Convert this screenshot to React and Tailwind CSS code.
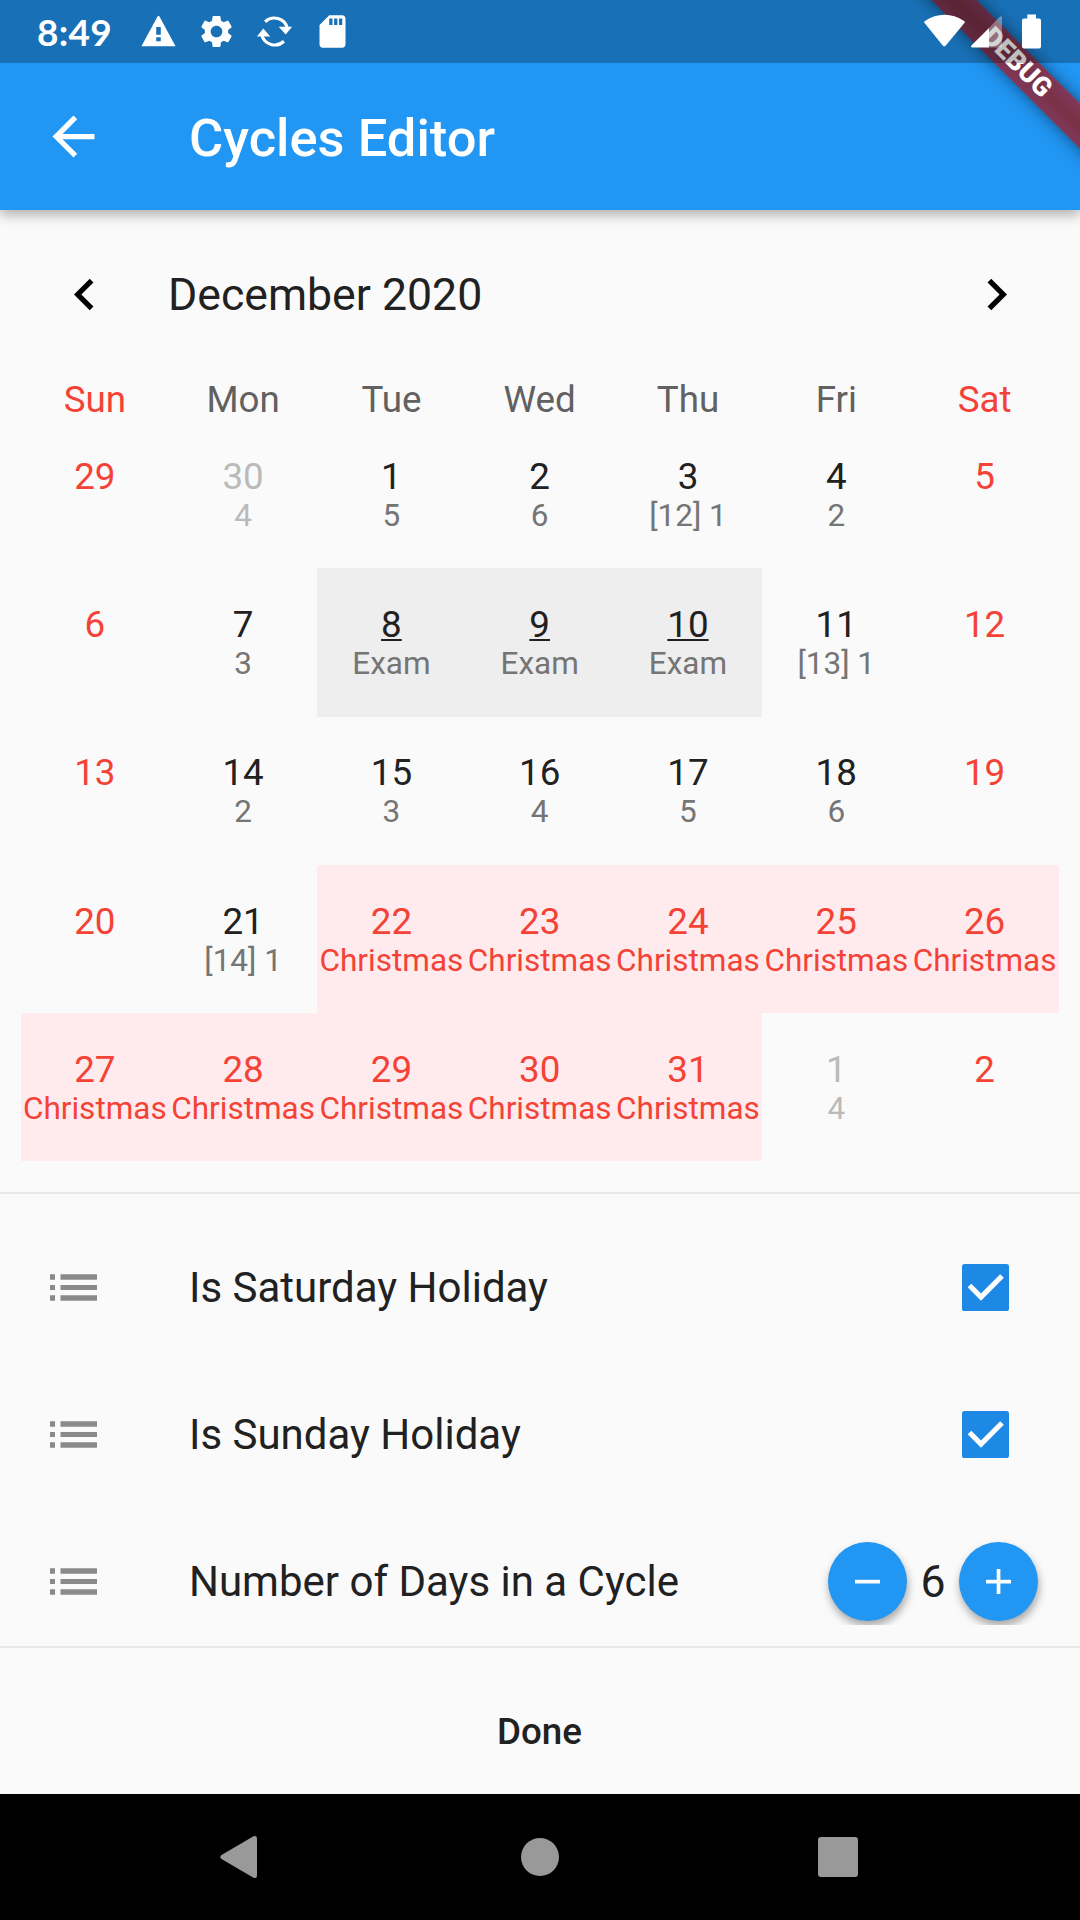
import React from "react";

const red = "text-[#f44336]";
const ink = "text-[#212121]";
const grey = "text-[#757575]";
const faded = "text-[#bababa]";

const weekdays = ["Sun", "Mon", "Tue", "Wed", "Thu", "Fri", "Sat"];

// Each day: [number, label, kind]
const days = [
  ["29", "", "off"], ["30", "4", "out"], ["1", "5"], ["2", "6"], ["3", "[12] 1"], ["4", "2"], ["5", "", "off"],
  ["6", "", "off"], ["7", "3"], ["8", "Exam", "exam"], ["9", "Exam", "exam"], ["10", "Exam", "exam"], ["11", "[13] 1"], ["12", "", "off"],
  ["13", "", "off"], ["14", "2"], ["15", "3"], ["16", "4"], ["17", "5"], ["18", "6"], ["19", "", "off"],
  ["20", "", "off"], ["21", "[14] 1"], ["22", "Christmas", "xmas"], ["23", "Christmas", "xmas"], ["24", "Christmas", "xmas"], ["25", "Christmas", "xmas"], ["26", "Christmas", "xmas"],
  ["27", "Christmas", "xmas"], ["28", "Christmas", "xmas"], ["29", "Christmas", "xmas"], ["30", "Christmas", "xmas"], ["31", "Christmas", "xmas"], ["1", "4", "out"], ["2", "", "off"],
];

const kinds = {
  off: { cell: "", num: red, sub: red },
  out: { cell: "", num: faded, sub: faded },
  exam: { cell: "bg-[#eeeeee]", num: ink + " underline decoration-[2px] underline-offset-[2px]", sub: grey },
  xmas: { cell: "bg-[#ffebee]", num: red, sub: red },
  normal: { cell: "", num: ink, sub: grey },
};

function Icon({ d, size, className = "", children }) {
  return (
    <svg viewBox="0 0 24 24" className={size + " shrink-0 " + className} fill="currentColor">
      {d && <path d={d} />}
      {children}
    </svg>
  );
}

function StatusBar() {
  return (
    <div className="relative z-20 flex h-[63px] items-center bg-black/25 pl-[37px] text-white">
      <span className="w-[75px] whitespace-nowrap font-[Lato,sans-serif] text-[37px] font-bold leading-none tracking-[0.3px]">8:49</span>
      <div className="ml-[27px] flex items-center gap-[19px]">
        <Icon size="size-[39px]" d="M1.500 21h21L12.600 2.800q-.6-.9-1.200 0zm11.900-3h-2.800v-2.400h2.800v2.400zm0-4h-2.800V9.200h2.800v4.800z" />
        <Icon size="size-[39px]" d="M19.140 12.940c.04-.3.06-.61.06-.94 0-.32-.02-.64-.07-.94l2.030-1.580a.49.49 0 0 0 .12-.61l-1.920-3.320a.488.488 0 0 0-.59-.22l-2.390.96c-.5-.38-1.030-.7-1.620-.94l-.36-2.540a.484.484 0 0 0-.48-.41h-3.840c-.24 0-.43.17-.47.41l-.36 2.540c-.59.24-1.130.57-1.620.94l-2.390-.96c-.22-.08-.47 0-.59.22L2.740 8.870c-.12.21-.08.47.12.61l2.030 1.580c-.05.3-.09.63-.09.94s.02.64.07.94l-2.030 1.580a.49.49 0 0 0-.12.61l1.920 3.320c.12.22.37.29.59.22l2.390-.96c.5.38 1.030.7 1.620.94l.36 2.540c.05.24.24.41.48.41h3.840c.24 0 .44-.17.47-.41l.36-2.540c.59-.24 1.130-.56 1.620-.94l2.390.96c.22.08.47 0 .59-.22l1.920-3.320c.12-.22.07-.47-.12-.61l-2.010-1.580zM12 15.600c-1.980 0-3.600-1.620-3.600-3.600s1.620-3.600 3.600-3.600 3.600 1.620 3.600 3.600-1.620 3.600-3.600 3.600z" />
        <Icon size="size-[39px]">
          <path d="M6.200 6A8.300 8.300 0 0 1 19.900 9.900M17.800 18A8.300 8.300 0 0 1 4.100 14.100" fill="none" stroke="currentColor" strokeWidth="1.900" />
          <path d="M14.600 9h8.200l-3.900 4.800zM9.400 15H1.200l3.900-4.800z" />
        </Icon>
        <Icon size="size-[39px]" d="M18 2h-8L4.020 8 4 20c0 1.100.9 2 2 2h12c1.100 0 2-.9 2-2V4c0-1.100-.9-2-2-2zm-6 6h-2V4h2v4zm3 0h-2V4h2v4zm3 0h-2V4h2v4z" />
      </div>
      <svg viewBox="0 0 120 36" className="ml-auto mr-[36px] h-[36px] w-[120px]" fill="currentColor">
        <path d="M1 9.500C-.3 8.300 0 7.700 1 7 13-1.500 28-1.500 40 7c1 .7 1.300 1.300 0 2.500L22 31.300c-1.200 1.500-2.300 1.500-3.500 0z" />
        <path d="M65 14v19.500H48.500c-1.600 0-2-1-.8-2.200z" />
        <path d="M65 33.500V14L75.500 3C76.700 1.800 78 2 78 3.500v30z" opacity=".35" />
        <path d="M103.300.5h8.700v4h3q2 0 2 2v26q0 2-2 2h-15q-2 0-2-2v-26q0-2 2-2h3.300z" />
      </svg>
    </div>
  );
}

function DebugBanner() {
  return (
    <div className="pointer-events-none absolute right-0 top-0 z-10 size-[210px] overflow-hidden">
      <div className="absolute left-[17px] top-[47.400px] flex h-[31.500px] w-[260px] rotate-45 items-center justify-center bg-linear-to-b from-[#80385a] from-0% via-[#7a3045] via-50% to-[#80385a] to-100% text-[26.775px] font-black leading-none text-white shadow-[0_0_16px_rgba(0,0,0,0.5)]">
        <span>DEBUG</span>
      </div>
    </div>
  );
}

function ListRow({ title, children }) {
  return (
    <div className="flex h-[147px] items-center pl-[42px] pr-[42px]">
      <svg viewBox="0 0 56 27" className="h-[27px] w-[56px] shrink-0" fill="#8a8a8a">
        <path d="M8 .3h5v5.500H8zM18.500.3H55v5.500H18.500zM8 10.900h5V16H8zM18.500 10.900H55V16H18.500zM8 21.300h5v5.500H8zM18.500 21.300H55v5.500H18.500z" />
      </svg>
      <span className="ml-[91px] flex-1 text-[42px] leading-[50px] text-[#212121]">{title}</span>
      {children}
    </div>
  );
}

function Check() {
  return (
    <svg viewBox="0 0 47 47" className="mr-[29px] size-[47px]" aria-label="checked">
      <rect width="47" height="47" rx="2.600" fill="#1e88e5" />
      <path d="M7.500 21.500L19 33 40 12" fill="none" stroke="#fff" strokeWidth="5.200" />
    </svg>
  );
}

function RoundButton({ plus }) {
  return (
    <button className="flex size-[79px] items-center justify-center rounded-full bg-[#2196f3] shadow-[1px_5px_9px_rgba(0,0,0,0.34)]" aria-label={plus ? "Increase" : "Decrease"}>
      <svg viewBox="0 0 25 25" className="size-[25px]" fill="#fff">
        <path d="M0 10.800h25v3.700H0z" />
        {plus && <path d="M10.700 0h3.700v25h-3.700z" />}
      </svg>
    </button>
  );
}

export default function App() {
  return (
    <div className="flex h-[1920px] w-[1080px] flex-col overflow-hidden bg-[#fafafa] font-[Roboto,sans-serif]">
      <header className="relative h-[210px] shrink-0 bg-[#2196f3] text-white shadow-[0_5px_12px_rgba(0,0,0,0.3)]">
        <StatusBar />
        <div className="flex h-[147px] items-center pl-[42px]">
          <Icon size="size-[63px]" d="M20 11H7.830l5.590-5.590L12 4l-8 8 8 8 1.410-1.410L7.830 13H20v-2z" />
          <h1 className="ml-[84px] pt-[2px] text-[52.500px] font-medium leading-[62px]">Cycles Editor</h1>
        </div>
        <DebugBanner />
      </header>

      <div className="flex h-[168px] shrink-0 items-center px-[52.500px]">
        <Icon size="size-[63px]" d="M15.410 7.410L14 6l-6 6 6 6 1.410-1.410L10.830 12z" />
        <span className="ml-[52.500px] flex-1 pt-[2px] text-[44.625px] leading-[52px] text-[#212121]">December 2020</span>
        <Icon size="size-[63px]" d="M10 6L8.590 7.410 13.170 12l-4.580 4.590L10 18l6-6z" />
      </div>

      <div className="grid h-[42px] shrink-0 grid-cols-7 pl-[20.700px] pr-[21.300px] text-center text-[36.750px] leading-[43px]">
        {weekdays.map((d, i) => (
          <span key={d} className={i % 6 === 0 ? red : "text-[#616161]"}>{d}</span>
        ))}
      </div>

      <div className="grid h-[741.400px] shrink-0 grid-cols-7 grid-rows-5 pl-[20.700px] pr-[21.300px]">
        {days.map(([n, label, kind], i) => {
          const k = kinds[kind || "normal"];
          return (
            <div key={i} className={"flex flex-col items-center whitespace-nowrap pt-[34.800px] " + k.cell}>
              <span className={"text-[36.750px] leading-[43px] " + k.num}>{n}</span>
              <span className={"mt-[-1px] text-[31.500px] leading-[37px] " + k.sub}>{label}</span>
            </div>
          );
        })}
      </div>

      <div className="mt-[31px] h-[454px] shrink-0 border-t-2 border-[#e8e8e8]">
        <div className="h-[431px] overflow-hidden pt-[20px]">
          <ListRow title="Is Saturday Holiday"><Check /></ListRow>
          <ListRow title="Is Sunday Holiday"><Check /></ListRow>
          <ListRow title="Number of Days in a Cycle">
            <div className="flex items-center">
              <RoundButton />
              <span className="w-[52px] text-center text-[44.625px] leading-[52px] text-[#212121]">6</span>
              <RoundButton plus />
            </div>
          </ListRow>
        </div>
      </div>

      <div className="flex flex-1 items-center justify-center border-t-2 border-[#e8e8e8] pr-px pt-[20px]">
        <span className="text-[36.750px] font-medium leading-[43px] text-[#212121]">Done</span>
      </div>

      <nav className="flex h-[126px] shrink-0 items-center justify-center bg-black">
        <svg viewBox="0 0 640 44" className="h-[44px] w-[640px]" fill="#999">
          <path d="M1.500 20L33.500 1.300Q37 0 37 3.500v37q0 3.500-3.500 2.200L1.500 24Q-1 22 1.500 20z" />
          <circle cx="320" cy="22" r="19" />
          <rect x="598" y="2" width="40" height="40" rx="3" />
        </svg>
      </nav>
    </div>
  );
}
